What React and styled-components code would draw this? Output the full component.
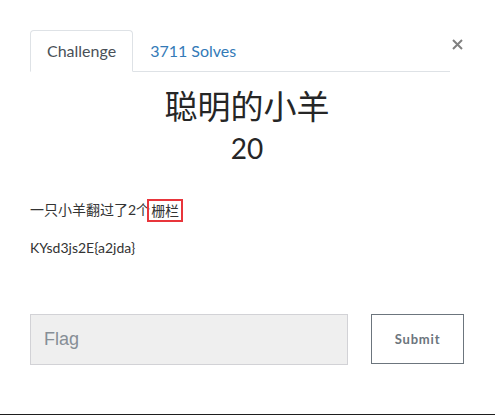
import React from "react";
import styled, { createGlobalStyle } from "styled-components";

const Global = createGlobalStyle`
  html, body {
    margin: 0;
    padding: 0;
    background: #fff;
  }
  body {
    font-family: Lato, "Noto Sans CJK SC", sans-serif;
    color: #212529;
  }
  * { box-sizing: border-box; }
`;

const Modal = styled.div`
  height: 415px;
  padding: 30px 31px 0 30px;
  border-bottom: 1px solid #1e1e1e;
  display: flex;
  flex-direction: column;
`;

const Header = styled.div`
  display: flex;
  align-items: flex-start;
`;

const Tabs = styled.ul`
  flex: 1;
  display: flex;
  margin: 0;
  padding: 0;
  list-style: none;
  border-bottom: 1px solid #dee2e6;
`;

const Tab = styled.li`
  margin-bottom: -1px;
  padding: 8px 16px;
  font-size: 16px;
  line-height: 24px;
  border: 1px solid ${(p) => (p.$active ? "#dee2e6" : "transparent")};
  border-bottom-color: ${(p) => (p.$active ? "#fff" : "transparent")};
  border-radius: 4px 4px 0 0;
  background: ${(p) => (p.$active ? "#fff" : "transparent")};
  color: ${(p) => (p.$active ? "#495057" : "#337ab7")};
`;

const Close = styled.button`
  border: 0;
  background: none;
  padding: 0;
  margin: 2px 0 0 0;
  width: 14px;
  height: 24px;
  display: flex;
  align-items: center;
  justify-content: center;
  cursor: pointer;
`;

const Title = styled.h2`
  margin: 13px 0 0;
  text-align: center;
  font-weight: 400;
  font-size: 33px;
  line-height: 42px;
  color: #262626;
`;

const Points = styled.h3`
  margin: 0;
  text-align: center;
  font-weight: 400;
  font-size: 28px;
  line-height: 42px;
  color: #262626;
`;

const Description = styled.div`
  margin-top: 30px;
  font-size: 14px;
  line-height: 21px;
  color: #333;
`;

const Para = styled.p`
  margin: 0 0 15px;
`;

const Marked = styled.span`
  display: inline-block;
  margin-left: -3px;
  padding: 0 2px;
  line-height: 19px;
  vertical-align: -1px;
  border: 2px solid #e8353b;
`;

const FlagRow = styled.form`
  display: flex;
  justify-content: space-between;
  align-items: flex-start;
  margin-top: 41px;
`;

const FlagInput = styled.input`
  width: 318px;
  height: 51px;
  padding: 0 13px;
  background: #efefef;
  border: 1px solid #d2d2d6;
  font-family: "Liberation Sans", Arial, sans-serif;
  font-size: 18px;
  color: #495057;
  outline: none;
  &::placeholder {
    color: #868e96;
  }
`;

const SubmitButton = styled.button`
  width: 93px;
  height: 50px;
  background: #fff;
  border: 1px solid #6c757d;
  color: #6c757d;
  font-family: Lato, sans-serif;
  font-weight: 700;
  font-size: 13px;
  letter-spacing: 0.8px;
  cursor: pointer;
`;

export default function App() {
  return (
    <>
      <Global />
      <Modal>
        <Header>
          <Tabs>
            <Tab $active>Challenge</Tab>
            <Tab>3711 Solves</Tab>
          </Tabs>
          <Close aria-label="Close">
            <svg width="11" height="11" viewBox="0 0 11 11">
              <path
                d="M1 1 L10 10 M10 1 L1 10"
                stroke="#808080"
                strokeWidth="2"
              />
            </svg>
          </Close>
        </Header>
        <Title>聪明的小羊</Title>
        <Points>20</Points>
        <Description>
          <Para>
            一只小羊翻过了2个<Marked>栅栏</Marked>
          </Para>
          <Para>KYsd3js2E{"{"}a2jda{"}"}</Para>
        </Description>
        <FlagRow onSubmit={(e) => e.preventDefault()}>
          <FlagInput placeholder="Flag" />
          <SubmitButton type="submit">Submit</SubmitButton>
        </FlagRow>
      </Modal>
    </>
  );
}
